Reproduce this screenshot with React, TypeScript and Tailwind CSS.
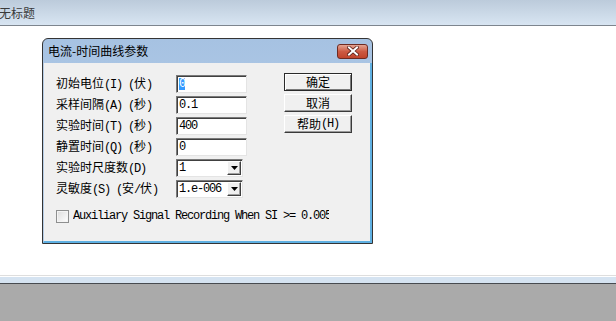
import type { ReactNode } from 'react'

const CJK = '"Noto Sans CJK SC", "Noto Sans", sans-serif'

// ASCII runs use a mono font (SimSun-like half width), CJK runs the CJK font
function Mixed({ text }: { text: string }) {
  const parts = text.split(/([\x20-\x7e]+)/).filter(Boolean)
  return (
    <>
      {parts.map((p, i) =>
        /^[\x20-\x7e]+$/.test(p) ? (
          <span key={i} className="font-['Liberation_Mono',monospace] text-[12px] tracking-[-1.2px] whitespace-pre">
            {p}
          </span>
        ) : (
          <span key={i}>{p}</span>
        )
      )}
    </>
  )
}

function TextBox({ children }: { children: ReactNode }) {
  return (
    <div className="w-[71px] h-[18px] bg-white border border-t-[#7a7a7a] border-l-[#7a7a7a] border-b-[#e4e4e4] border-r-[#e4e4e4] shadow-[inset_1px_1px_0_#404040] flex items-center pl-[2px] font-['Liberation_Mono',monospace] text-[12px] tracking-[-1.2px] text-black leading-none whitespace-pre">
      {children}
    </div>
  )
}

function Combo({ value }: { value: string }) {
  return (
    <div className="w-[67px] h-[18px] bg-white border border-t-[#7a7a7a] border-l-[#7a7a7a] border-b-[#e4e4e4] border-r-[#e4e4e4] shadow-[inset_1px_1px_0_#404040] flex items-center pl-[2px] pr-[1px] font-['Liberation_Mono',monospace] text-[12px] tracking-[-1.2px] text-black leading-none whitespace-pre">
      <span className="flex-1">{value}</span>
      <div className="w-[14px] h-[14px] bg-[#f0f0f0] border border-t-white border-l-white border-b-[#404040] border-r-[#404040] shadow-[inset_-1px_-1px_0_#a0a0a0] flex items-center justify-center">
        <svg width="7" height="4" viewBox="0 0 7 4">
          <path d="M0 0h7L3.5 4z" fill="#000" />
        </svg>
      </div>
    </div>
  )
}

function Btn({ label, primary }: { label: string; primary?: boolean }) {
  return (
    <div
      className={
        'w-[68px] h-[18px] flex items-center justify-center bg-[#f0f0f0] text-[12px] text-black leading-none ' +
        (primary
          ? 'border border-[#2a2a2a] shadow-[inset_1px_1px_0_#ffffff,inset_-1px_-1px_0_#7a7a7a]'
          : 'border border-t-white border-l-white border-b-[#3a3a3a] border-r-[#3a3a3a] shadow-[inset_-1px_-1px_0_#9a9a9a]')
      }
    >
      <Mixed text={label} />
    </div>
  )
}

const rows: { label: string; field: ReactNode }[] = [
  {
    label: '初始电位(I) (伏)',
    field: (
      <TextBox>
        <span className="bg-[#3399ff] text-white">0</span>
      </TextBox>
    ),
  },
  { label: '采样间隔(A) (秒)', field: <TextBox>0.1</TextBox> },
  { label: '实验时间(T) (秒)', field: <TextBox>400</TextBox> },
  { label: '静置时间(Q) (秒)', field: <TextBox>0</TextBox> },
  { label: '实验时尺度数(D)', field: <Combo value="1" /> },
  { label: '灵敏度(S) (安/伏)', field: <Combo value="1.e-006" /> },
]

export default function App() {
  return (
    <div className="w-[616px] h-[321px] flex flex-col bg-white overflow-hidden" style={{ fontFamily: CJK }}>
      {/* main window title */}
      <div className="h-[26px] shrink-0 bg-gradient-to-b from-[#bccbdb] to-[#d8e5f2] border-b border-[#7d858e] flex items-center">
        <span className="text-[12px] text-[#3a3a3a] leading-none -ml-[1px]">无标题</span>
      </div>

      {/* client */}
      <div className="flex-1 pt-[12px] pl-[42px]">
        <div className="w-[331px] h-[206px] flex flex-col border border-[#343434] rounded-t-[6px] bg-gradient-to-b from-[#a6c2e2] to-[#c2d7ee] overflow-hidden">
          <div className="h-[24px] shrink-0 flex items-center justify-between pl-[5px] pr-[4px]">
            <span className="text-[12px] text-black leading-none">电流-时间曲线参数</span>
            <div className="w-[31px] h-[15px] rounded-[3px] border border-[#6e2b22] bg-gradient-to-b from-[#e3a493] via-[#cc5a43] to-[#c0442c] flex items-center justify-center">
              <svg width="12" height="10" viewBox="0 0 12 10">
                <path d="M2 1.5l8 7M10 1.5l-8 7" stroke="#5a2018" strokeWidth="3.6" strokeLinecap="square" />
                <path d="M2 1.5l8 7M10 1.5l-8 7" stroke="#ffffff" strokeWidth="2" strokeLinecap="square" />
              </svg>
            </div>
          </div>

          <div className="flex-1 bg-[#f0f0f0] border-l border-r-[2px] border-b-[2px] border-l-[#b7cde6] border-r-[#5fb0e2] border-b-[#5fb0e2] flex flex-col">
            <div className="flex">
              <div className="pl-[12px] pt-[10px] flex flex-col">
                {rows.map((r) => (
                  <div key={r.label} className="h-[21px] flex items-center">
                    <div className="w-[120px] text-[12px] text-black leading-none whitespace-nowrap">
                      <Mixed text={r.label} />
                    </div>
                    {r.field}
                  </div>
                ))}
              </div>
              <div className="ml-[37px] pt-[10px] flex flex-col gap-[3px]">
                <Btn label="确定" primary />
                <Btn label="取消" />
                <Btn label="帮助(H)" />
              </div>
            </div>

            <div className="mt-[10px] pl-[12px] h-[14px] flex items-center">
              <div className="w-[13px] h-[13px] border border-[#8e8f8f] bg-gradient-to-br from-[#dcdcdc] to-[#ffffff] shadow-[inset_0_0_0_1px_#f4f4f4]" />
              <div className="ml-[4px] w-[256px] overflow-hidden whitespace-pre font-['Liberation_Mono',monospace] text-[12px] tracking-[-1.2px] text-black leading-none">
                Auxiliary Signal Recording When SI &gt;= 0.005
              </div>
            </div>
          </div>
        </div>
      </div>

      {/* status area */}
      <div className="shrink-0 h-px bg-[#dedede]" />
      <div className="shrink-0 h-px bg-white" />
      <div className="shrink-0 h-[6px] bg-[#d5e3f1]" />
      <div className="shrink-0 h-px bg-[#474b50]" />
      <div className="shrink-0 h-[37px] bg-[#aaaaaa]" />
    </div>
  )
}
